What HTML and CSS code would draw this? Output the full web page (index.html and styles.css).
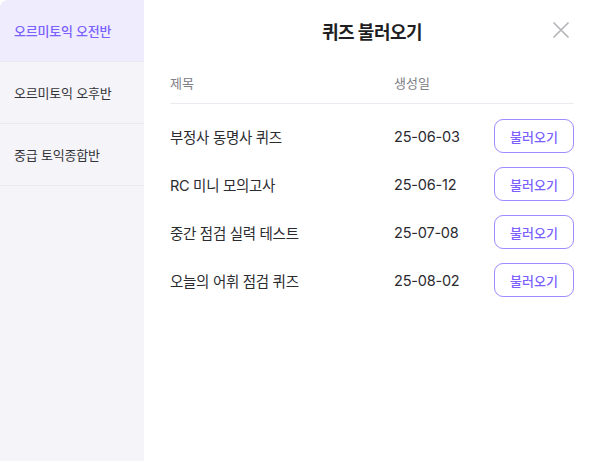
FILE: index.html
```html
<!DOCTYPE html>
<html lang="ko">
<head>
<meta charset="utf-8">
<link rel="stylesheet" href="styles.css">
</head>
<body>
<div class="modal">
  <aside class="sidebar">
    <div class="side-item active">오르미토익 오전반</div>
    <div class="side-item">오르미토익 오후반</div>
    <div class="side-item">중급 토익종합반</div>
  </aside>
  <main class="main">
    <header class="head">
      <h1 class="title">퀴즈 불러오기</h1>
      <button class="close" aria-label="닫기">
        <svg width="16" height="16" viewBox="0 0 16 16"><path d="M1 1L15 15M15 1L1 15" stroke="#b5b5ba" stroke-width="1.7" stroke-linecap="round" fill="none"/></svg>
      </button>
    </header>
    <div class="thead">
      <span>제목</span>
      <span>생성일</span>
      <span></span>
    </div>
    <div class="rows">
      <div class="row"><span class="name">부정사 동명사 퀴즈</span><span class="date">25-06-03</span><button class="load">불러오기</button></div>
      <div class="row"><span class="name">RC 미니 모의고사</span><span class="date">25-06-12</span><button class="load">불러오기</button></div>
      <div class="row"><span class="name">중간 점검 실력 테스트</span><span class="date">25-07-08</span><button class="load">불러오기</button></div>
      <div class="row"><span class="name">오늘의 어휘 점검 퀴즈</span><span class="date">25-08-02</span><button class="load">불러오기</button></div>
    </div>
  </main>
</div>
</body>
</html>
```

FILE: styles.css
```css
* { box-sizing: border-box; }
html, body { margin: 0; padding: 0; background: #fff; }
body {
  font-family: Inter, "Noto Sans CJK KR", sans-serif;
  color: #2b2b2f;
}
.modal {
  display: flex;
  width: 600px;
  height: 461px;
  background: #fff;
  border-radius: 8px 8px 0 0;
  overflow: hidden;
}
.sidebar {
  width: 144px;
  flex: none;
  background: #f5f4f9;
  display: flex;
  flex-direction: column;
}
.side-item {
  height: 62px;
  padding-left: 14px;
  display: flex;
  align-items: center;
  font-size: 13px;
  color: #333338;
  border-bottom: 1px solid #ebe9f2;
  letter-spacing: -0.2px;
}
.side-item.active {
  background: #efedfd;
  color: #7b61ff;
  font-weight: 500;
}
.main {
  flex: 1;
  padding: 0 26px;
  display: flex;
  flex-direction: column;
}
.head {
  height: 62px;
  position: relative;
  display: flex;
  align-items: center;
  justify-content: center;
}
.title {
  margin: 0;
  font-size: 18px;
  font-weight: 700;
  color: #1f1f23;
  letter-spacing: -0.5px;
}
.close {
  position: absolute;
  right: 5px;
  top: 22px;
  width: 16px;
  height: 16px;
  padding: 0;
  border: 0;
  background: none;
  display: flex;
}
.thead {
  height: 42px;
  display: grid;
  grid-template-columns: 224px 1fr 80px;
  align-items: center;
  font-size: 13px;
  color: #808087;
  border-bottom: 1px solid #ecebf1;
}
.rows {
  padding-top: 8px;
  display: flex;
  flex-direction: column;
}
.row {
  height: 48px;
  display: grid;
  grid-template-columns: 224px 1fr 80px;
  align-items: center;
  font-size: 14.5px;
}
.name { color: #2b2b30; letter-spacing: -0.3px; }
.date { color: #2b2b30; letter-spacing: -0.2px; }
.load {
  height: 34px;
  width: 80px;
  border: 1px solid #9d8cff;
  border-radius: 9px;
  background: #fff;
  color: #7b61ff;
  font-family: inherit;
  font-size: 13px;
  font-weight: 500;
  padding: 0;
}
```
